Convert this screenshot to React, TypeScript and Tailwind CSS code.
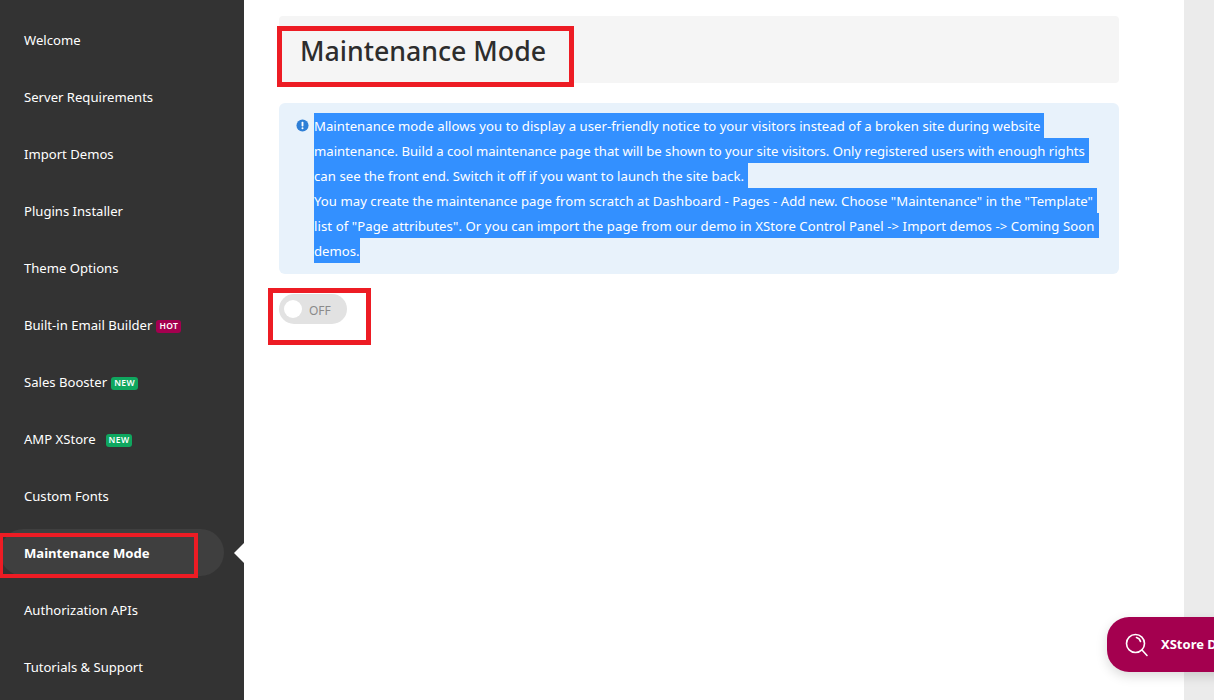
const font = "[font-family:'Noto_Sans',sans-serif]";

const menuItems: { label: string; badge?: string; gap?: string }[] = [
  { label: "Welcome" },
  { label: "Server Requirements" },
  { label: "Import Demos" },
  { label: "Plugins Installer" },
  { label: "Theme Options" },
  { label: "Built-in Email Builder", badge: "HOT", gap: "ml-[4px]" },
  { label: "Sales Booster", badge: "NEW", gap: "ml-[4px]" },
  { label: "AMP XStore", badge: "NEW", gap: "ml-[10px]" },
  { label: "Custom Fonts" },
  { label: "Maintenance Mode" },
  { label: "Authorization APIs" },
  { label: "Tutorials & Support" },
];

// tracking per line keeps the line ends where the reference wraps them
const noticeLines = [
  { text: "Maintenance mode allows you to display a user-friendly notice to your visitors instead of a broken site during website", className: "tracking-[0.026px] pr-[4px]" },
  { text: "maintenance. Build a cool maintenance page that will be shown to your site visitors. Only registered users with enough rights", className: "tracking-[-0.016px] pr-[4px]" },
  { text: "can see the front end. Switch it off if you want to launch the site back.", className: "tracking-[0.04px] pr-[4px]" },
  { text: 'You may create the maintenance page from scratch at Dashboard - Pages - Add new. Choose "Maintenance" in the "Template"', className: "tracking-[0.04px] pr-[4px]" },
  { text: 'list of "Page attributes". Or you can import the page from our demo in XStore Control Panel -> Import demos -> Coming Soon', className: "tracking-[0.08px] pr-[4px]" },
  { text: "demos.", className: "" },
];

function Sidebar() {
  return (
    <aside className="w-[244px] h-[700px] shrink-0 bg-[#333333] pt-[12px] relative">
      {menuItems.map((item) => {
        const active = item.label === "Maintenance Mode";
        return (
          <div key={item.label} className="h-[57px] flex items-center relative">
            {active && (
              <>
                <div className="absolute left-0 top-[4px] w-[224px] h-[47px] rounded-[24px] bg-[#3f3f3f]" />
                <div className="absolute right-0 top-[18px] w-0 h-0 border-y-[10px] border-y-transparent border-r-[10px] border-r-white" />
                <div className="absolute left-[-1px] top-[8px] w-[199px] h-[45px] border-[4px] border-[#ed1c24]" />
              </>
            )}
            <span className={`relative ml-[24px] text-[13.1px] text-white ${active ? "font-bold text-[12.95px]" : ""}`}>
              {item.label}
            </span>
            {item.badge && (
              <span
                className={`relative ${item.gap} mt-[2px] h-[13px] px-[3px] rounded-[3px] flex items-center text-[8.5px] font-semibold tracking-[0.4px] text-white ${
                  item.badge === "HOT" ? "bg-[#a4004f]" : "bg-[#0fa75f]"
                }`}
              >
                {item.badge}
              </span>
            )}
          </div>
        );
      })}
    </aside>
  );
}

function InfoIcon() {
  return (
    <svg viewBox="0 0 14 14" className="w-[13px] h-[13px] shrink-0 mt-[6px]">
      <circle cx="7" cy="7" r="6.5" fill="#2e7fd6" />
      <rect x="6" y="3" width="2" height="5" rx="0.8" fill="#fff" />
      <circle cx="7" cy="10" r="1.1" fill="#fff" />
    </svg>
  );
}

export default function App() {
  return (
    <div className={`relative w-[1214px] h-[700px] overflow-hidden flex bg-white ${font}`}>
      <Sidebar />
      <main className="w-[940px] shrink-0 pl-[35px] pt-[16px]">
        <div className="relative w-[840px] h-[67px] rounded-[4px] bg-[#f5f5f5] flex items-center pl-[21px] pt-[4px]">
          <h1 className="text-[26.7px] font-medium text-[#2d2d2d]">Maintenance Mode</h1>
          <div className="absolute left-[-2px] top-[10px] w-[297px] h-[61px] border-[5px] border-[#ed1c24]" />
        </div>
        <div className="mt-[20px] w-[840px] h-[171px] rounded-[6px] bg-[#e8f2fb] pt-[10px] pl-[17px] flex gap-[5px]">
          <InfoIcon />
          <div className="text-[13.15px] leading-[26px] text-white">
            {noticeLines.map((line) => (
              <div key={line.text} className={`h-[25px] w-fit whitespace-nowrap bg-[#3390ff] ${line.className}`}>
                {line.text}
              </div>
            ))}
          </div>
        </div>
        <div className="relative mt-[20px] w-[68px] h-[30px] rounded-full bg-[#e2e2e2] flex items-center pl-[5px] gap-[7px]">
          <span className="w-[18px] h-[18px] rounded-full bg-white" />
          <span className="mt-[3px] text-[12px] text-[#8a8a8a]">OFF</span>
          <div className="absolute left-[-11px] top-[-6px] w-[103px] h-[57px] border-[5px] border-[#ed1c24]" />
        </div>
      </main>
      <div className="w-[30px] shrink-0 bg-[#ebebeb]" />
      <button className="absolute left-[1107px] top-[617px] w-[140px] h-[55px] rounded-l-[22px] bg-[#a4004f] shadow-[0_4px_12px_rgba(0,0,0,0.15)] flex items-center pl-[18px] gap-[12px] text-white">
        <svg viewBox="0 0 24 24" className="w-[24px] h-[24px] shrink-0" fill="none" stroke="#fff" strokeWidth="1.6" strokeLinecap="round">
          <circle cx="10.5" cy="10.5" r="9" />
          <path d="M17 17l5 5.5" />
          <path d="M11.5 4.5a5.5 5.5 0 0 1 4 4" />
        </svg>
        <span className="text-[13px] font-bold whitespace-nowrap">XStore D</span>
      </button>
    </div>
  );
}
